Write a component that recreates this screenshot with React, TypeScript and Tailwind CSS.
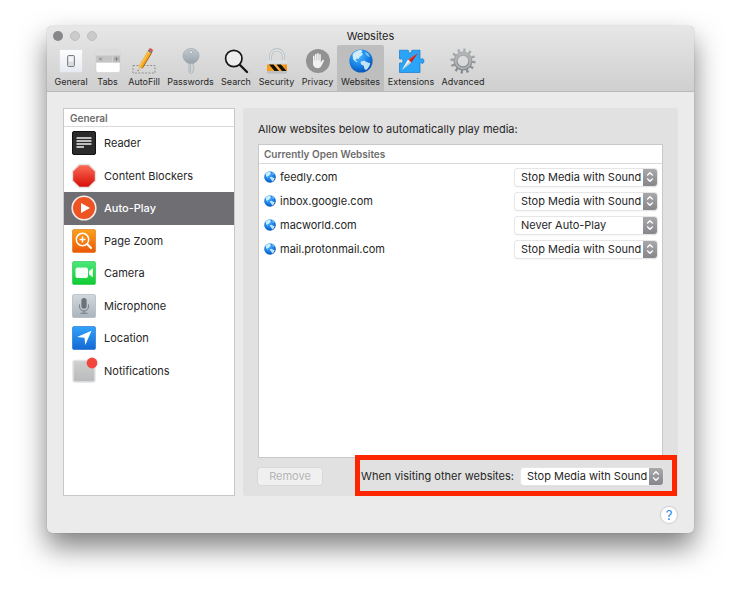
import { useState } from "react";
import type { ReactNode } from "react";

type ToolbarItem = { label: string; width: string; icon: ReactNode };
type SidebarItem = { label: string; icon: ReactNode };
type Website = { host: string; policy: string };

const policies = ["Allow All Auto-Play", "Stop Media with Sound", "Never Auto-Play"];

const Gradients = () => (
  <svg className="absolute h-0 w-0" aria-hidden="true">
    <defs>
      <linearGradient id="light" x1="0" y1="0" x2="0" y2="1">
        <stop offset="0" stopColor="#fdfdfe" />
        <stop offset="1" stopColor="#e6eaf0" />
      </linearGradient>
      <linearGradient id="steel" x1="0" y1="0" x2="0" y2="1">
        <stop offset="0" stopColor="#c3cbd1" />
        <stop offset="1" stopColor="#98a3ab" />
      </linearGradient>
      <linearGradient id="gear" x1="0" y1="0" x2="0" y2="1">
        <stop offset="0" stopColor="#a9acae" />
        <stop offset="1" stopColor="#85888b" />
      </linearGradient>
      <linearGradient id="body" x1="0" y1="0" x2="0" y2="1">
        <stop offset="0" stopColor="#e2e5e8" />
        <stop offset="1" stopColor="#b6babd" />
      </linearGradient>
      <linearGradient id="amber" x1="0" y1="0" x2="1" y2="0">
        <stop offset="0" stopColor="#f59a12" />
        <stop offset="0.5" stopColor="#fdb63a" />
        <stop offset="1" stopColor="#f28c0f" />
      </linearGradient>
      <radialGradient id="ocean" cx="0.4" cy="0.3" r="0.7">
        <stop offset="0" stopColor="#4db8ff" />
        <stop offset="0.6" stopColor="#1680e6" />
        <stop offset="1" stopColor="#0a55b5" />
      </radialGradient>
      <linearGradient id="red" x1="0" y1="0" x2="0" y2="1">
        <stop offset="0" stopColor="#fb6a55" />
        <stop offset="1" stopColor="#d80f08" />
      </linearGradient>
      <linearGradient id="orange" x1="0" y1="0" x2="0" y2="1">
        <stop offset="0" stopColor="#fba31d" />
        <stop offset="1" stopColor="#ec5608" />
      </linearGradient>
      <linearGradient id="green" x1="0" y1="0" x2="0" y2="1">
        <stop offset="0" stopColor="#4be77a" />
        <stop offset="1" stopColor="#10cb33" />
      </linearGradient>
      <linearGradient id="silver" x1="0" y1="0" x2="0" y2="1">
        <stop offset="0" stopColor="#d2d9de" />
        <stop offset="1" stopColor="#aab4bc" />
      </linearGradient>
      <linearGradient id="blue" x1="0" y1="0" x2="0" y2="1">
        <stop offset="0" stopColor="#31a3fb" />
        <stop offset="1" stopColor="#1468d4" />
      </linearGradient>
      <linearGradient id="gray" x1="0" y1="0" x2="0" y2="1">
        <stop offset="0" stopColor="#cfcfcf" />
        <stop offset="1" stopColor="#b9babc" />
      </linearGradient>
    </defs>
  </svg>
);

const Icon = ({ children }: { children: ReactNode }) => (
  <svg viewBox="0 0 26 26" className="h-[26px] w-[26px] shrink-0" aria-hidden="true">
    {children}
  </svg>
);

const Globe = ({ className }: { className: string }) => (
  <svg viewBox="0 0 24 24" className={className} aria-hidden="true">
    <circle cx="12" cy="12" r="11.6" fill="url(#ocean)" />
    <path
      d="M3.500 5.500C5.500 2.800 8.500 1 12 .8l1.500 1.700-1.500 1 1.800 1-.6 1.700-2.400 1.600L9.500 10l-1.700-.6L6.500 11l2 1.800-1 .4L4.200 10.500z"
      fill="#d0ebfc"
    />
    <path
      d="M11.500 12.800l3.300-1.300 2.700 1.500 3.700 1.200c-.5 2.800-2 5.200-4.200 6.800L15.500 20l-.8-3.200-2.700-1.600z"
      fill="#c3e3fa"
    />
    <path d="M16 2.500l2.800 1.700L21 7.500l-1.800.3-2.400-2z" fill="#74c2f8" />
  </svg>
);

const toolbar: ToolbarItem[] = [
  {
    label: "General",
    width: "w-[40px]",
    icon: (
      <Icon>
        <rect x="1.500" y="1.500" width="23" height="23" rx="1" fill="url(#light)" stroke="#d3d5d8" strokeWidth=".5" />
        <rect x="9.600" y="7.500" width="6.800" height="11" rx="1" fill="#d9dbde" stroke="#777a7e" />
        <rect x="10.700" y="8.600" width="4.600" height="5" fill="#f3f4f5" />
      </Icon>
    ),
  },
  {
    label: "Tabs",
    width: "w-[33px]",
    icon: (
      <Icon>
        <rect x="1" y="2" width="24" height="22.500" rx="2" fill="#fff" stroke="#c8c8c8" strokeWidth=".5" />
        <path d="M1 14.500V4a2 2 0 0 1 2-2h20a2 2 0 0 1 2 2v10.500z" fill="#dcdcdc" />
        <path d="M1 7.500h16.500v7H1z" fill="#c5c5c5" />
        <path d="M18 7.500h7v7h-7z" fill="#bdbdbd" />
        <path d="M4 9.500l3 3m0-3l-3 3M19.500 11h4m-2-2v4" stroke="#777" strokeWidth=".8" />
      </Icon>
    ),
  },
  {
    label: "AutoFill",
    width: "w-[40px]",
    icon: (
      <Icon>
        <rect x="2" y="17.500" width="22" height="7.500" fill="none" stroke="#8a8a8a" strokeWidth=".9" strokeDasharray="2 1.400" />
        <path d="M6.500 23.500l1.200-5.200 2.800 1.600z" fill="#e8c498" />
        <path d="M7.700 18.300L16.800 3l3.700 2.200-9.300 15.200z" fill="#f7a51c" />
        <path d="M8.700 18.700L18 3.700" stroke="#ffd367" strokeWidth="1" />
        <path d="M11.200 20.400l9.300-15.200" stroke="#8a5210" strokeWidth=".8" />
        <path d="M16.800 3l1-1.500 3.700 2.200-1 1.500z" fill="#6b7176" />
        <path d="M17.800 1.500l.5-.9c1-.9 3.600.5 3.600 2l-.4 1.100z" fill="#e5484e" />
        <path d="M6.500 23.500l.4-1.800.9.600z" fill="#444" />
      </Icon>
    ),
  },
  {
    label: "Passwords",
    width: "w-[53px]",
    icon: (
      <Icon>
        <path d="M11 14h4v3.500l1.300 1-1.300 1.200 1.300 1.300-1.300 1.200V24l-1.700 1.800L11 24z" fill="#d3d7da" stroke="#969da2" strokeWidth=".6" />
        <path d="M12.600 14.500v9.500" stroke="#9aa1a6" strokeWidth=".6" />
        <path d="M5 8c0-4.500 3.500-7.500 8-7.500S21 3.500 21 8c0 3.600-3 6.300-5.500 7.300h-5C8 14.300 5 11.600 5 8z" fill="url(#steel)" stroke="#98a2a9" strokeWidth=".6" />
        <circle cx="13" cy="4.300" r="1.500" fill="#eceeef" stroke="#8b969e" strokeWidth=".6" />
      </Icon>
    ),
  },
  {
    label: "Search",
    width: "w-[38px]",
    icon: (
      <Icon>
        <circle cx="10.800" cy="10.500" r="8.200" fill="#f5f5f5" fillOpacity=".7" stroke="#171717" strokeWidth="1.700" />
        <path d="M17 17l7 7" stroke="#171717" strokeWidth="2.400" strokeLinecap="round" />
      </Icon>
    ),
  },
  {
    label: "Security",
    width: "w-[43px]",
    icon: (
      <Icon>
        <path d="M6.500 13V8.300a6.500 6.500 0 0 1 13 0V13" fill="none" stroke="#a9b3b9" strokeWidth="3" />
        <path d="M6.500 13V8.300a6.500 6.500 0 0 1 13 0V13" fill="none" stroke="#dce2e5" strokeWidth="1.800" />
        <rect x="3" y="12.500" width="20" height="13" rx="1" fill="url(#body)" />
        <path d="M3 16.500h20v6.500H3z" fill="url(#amber)" />
        <path d="M5 16.500h4.500l5.500 6.500h-4.500zM12.500 16.500H17l5.500 6.500H18z" fill="#17120b" />
      </Icon>
    ),
  },
  {
    label: "Privacy",
    width: "w-[39px]",
    icon: (
      <Icon>
        <circle cx="13" cy="13" r="12" fill="#929292" />
        <path
          d="M8 13.500V8.500c0-1.200 1.600-1.200 1.600 0v4h.4V6.600c0-1.200 1.700-1.200 1.700 0v5.600h.4V5.800c0-1.200 1.700-1.200 1.700 0v6.400h.4V7c0-1.200 1.600-1.200 1.600 0v7.500l1.500-2.200c.7-1 2-.4 1.600.6l-2.600 5.200c-.7 1.400-1.800 2.100-3.500 2.100C9.500 20.200 8 18 8 15.500z"
          fill="#f1f1f1"
        />
      </Icon>
    ),
  },
  { label: "Websites", width: "w-[47px]", icon: <Globe className="m-px h-6 w-6" /> },
  {
    label: "Extensions",
    width: "w-[54px]",
    icon: (
      <svg viewBox="0 0 28 26" className="h-[26px] w-7" aria-hidden="true">
        <path
          d="M2.500 2.200H11c.6 0 .7.800.4 1.300-.9 1.900 4.100 1.900 3.200 0-.3-.5-.2-1.300.4-1.300h8v8.600c.6.800 1.400.3 2-.1 2.600-.8 2.600 5.400 0 4.600-.6-.4-1.400-.9-2-.1v9.300H2.500v-9.300c.5-.7 1.200-.3 1.800 0 2.300.5 2.300-4.900 0-4.400-.6.300-1.300.700-1.800 0z"
          fill="#2aa4f6"
          stroke="#1279cf"
          strokeWidth=".7"
        />
        <path d="M20.800 5.200l-6.600 9.400-3.200-3.200z" fill="#ee3a2e" />
        <path d="M20.800 5.200l-6.600 9.400-1.600-1.600z" fill="#c01d18" />
        <path d="M5 21.800l6-10.400 3.200 3.200z" fill="#fafafa" />
        <path d="M5 21.800l7.600-8.800 1.600 1.600z" fill="#c4cbd0" />
      </svg>
    ),
  },
  {
    label: "Advanced",
    width: "w-[50px]",
    icon: (
      <Icon>
        <circle cx="13" cy="13" r="10.700" fill="none" stroke="url(#gear)" strokeWidth="3.600" strokeDasharray="2.200 3.402" />
        <circle cx="13" cy="13" r="7.400" fill="none" stroke="url(#gear)" strokeWidth="4.200" />
        <circle cx="13" cy="13" r="7.400" fill="none" stroke="#b5b8ba" strokeWidth="1.600" />
      </Icon>
    ),
  },
];

const sidebar: SidebarItem[] = [
  {
    label: "Reader",
    icon: (
      <Icon>
        <rect x="1.500" y="1.500" width="23" height="23" rx="1.500" fill="#2b2b2b" stroke="#111" />
        <path d="M5.500 8h15M5.500 11h15M5.500 14h15M5.500 17h7.500" stroke="#f0f0f0" strokeWidth="1.500" />
      </Icon>
    ),
  },
  {
    label: "Content Blockers",
    icon: (
      <Icon>
        <path d="M8 .8h10l7.200 7.200v10L18 25.200H8L.8 18V8z" fill="#e4e2e1" />
        <path d="M8.600 2.200h8.800l6.400 6.400v8.800l-6.400 6.400H8.600l-6.400-6.400V8.600z" fill="url(#red)" />
      </Icon>
    ),
  },
  {
    label: "Auto-Play",
    icon: (
      <Icon>
        <circle cx="13" cy="13" r="11.800" fill="#ee5323" stroke="#f3eeeb" strokeWidth="1.600" />
        <path d="M10 8l9 5-9 5z" fill="#fff" />
      </Icon>
    ),
  },
  {
    label: "Page Zoom",
    icon: (
      <Icon>
        <rect x="1.500" y="1.500" width="23" height="23" rx="1.500" fill="url(#orange)" stroke="#e26b0c" strokeWidth=".6" />
        <circle cx="11.500" cy="11.500" r="6.200" fill="none" stroke="#fff" strokeWidth="1.500" />
        <path d="M8.500 11.500h6m-3-3v6" stroke="#fff" strokeWidth="1.500" />
        <path d="M16.300 16.300l3.700 3.700" stroke="#fff" strokeWidth="2.200" strokeLinecap="round" />
      </Icon>
    ),
  },
  {
    label: "Camera",
    icon: (
      <Icon>
        <rect x="1.500" y="1.500" width="23" height="23" rx="1.500" fill="url(#green)" stroke="#1fc444" strokeWidth=".6" />
        <rect x="4.500" y="7.500" width="12.500" height="10.500" rx="2" fill="#f6fff8" />
        <path d="M18 11l3.800-2.800v9L18 14.500z" fill="#f6fff8" />
      </Icon>
    ),
  },
  {
    label: "Microphone",
    icon: (
      <Icon>
        <rect x="1.500" y="1.500" width="23" height="23" rx="1.500" fill="url(#silver)" stroke="#a3acb3" strokeWidth=".6" />
        <rect x="10.400" y="5" width="5.200" height="10.500" rx="2.600" fill="#6a7178" />
        <path d="M8.500 11.500v2a4.500 4.500 0 0 0 9 0v-2M13 18v2M9.500 20.300h7" fill="none" stroke="#757c83" />
      </Icon>
    ),
  },
  {
    label: "Location",
    icon: (
      <Icon>
        <rect x="1.500" y="1.500" width="23" height="23" rx="1.500" fill="url(#blue)" stroke="#1a6bc9" strokeWidth=".6" />
        <path d="M20.500 5.800L14.300 20l-.8-7.200-7.500-.8z" fill="#fff" />
      </Icon>
    ),
  },
  {
    label: "Notifications",
    icon: (
      <svg viewBox="0 0 26 26" className="h-[26px] w-[26px] shrink-0 overflow-visible" aria-hidden="true">
        <rect x="2" y="2.500" width="22" height="21.500" rx="2" fill="url(#gray)" stroke="#e3e3e3" strokeWidth="1.500" />
        <circle cx="21" cy="5" r="5.400" fill="#f2463f" />
      </svg>
    ),
  },
];

const initialWebsites: Website[] = [
  { host: "feedly.com", policy: "Stop Media with Sound" },
  { host: "inbox.google.com", policy: "Stop Media with Sound" },
  { host: "macworld.com", policy: "Never Auto-Play" },
  { host: "mail.protonmail.com", policy: "Stop Media with Sound" },
];

type PolicySelectProps = { id: string; value: string; onChange: (value: string) => void };

function PolicySelect({ id, value, onChange }: PolicySelectProps) {
  return (
    <div className="relative h-[17px] w-[142px] shrink-0 overflow-hidden rounded-[3px] bg-white shadow-[0_0_0_1px_#e6e6e6,0_1px_1px_#a8a8a8]">
      <select
        id={id}
        value={value}
        onChange={(e) => onChange(e.target.value)}
        className="block h-full w-full appearance-none bg-transparent pl-[6px] text-[11px] leading-[17px] outline-none"
      >
        {policies.map((policy) => (
          <option key={policy}>{policy}</option>
        ))}
      </select>
      <span className="pointer-events-none absolute inset-y-0 right-0 flex w-[14px] items-center justify-center bg-linear-to-b from-[#a9a9ad] to-[#86868b]">
        <svg viewBox="0 0 8 12" className="h-3 w-2" fill="none" stroke="#fff" strokeWidth="1.300" aria-hidden="true">
          <path d="M1.200 4.500L4 1.700l2.800 2.800M1.200 7.500L4 10.300l2.800-2.800" />
        </svg>
      </span>
    </div>
  );
}

export default function App() {
  const [tab, setTab] = useState("Websites");
  const [section, setSection] = useState("Auto-Play");
  const [websites, setWebsites] = useState(initialWebsites);
  const [otherPolicy, setOtherPolicy] = useState("Stop Media with Sound");

  const handlePolicyChange = (host: string, policy: string) => {
    setWebsites((prev) => prev.map((site) => (site.host === host ? { ...site, policy } : site)));
  };

  return (
    <div className="min-h-screen bg-white px-[47px] pt-[26px] pb-[66px] font-[Inter,'Liberation_Sans',sans-serif] text-[11px] text-[#262626]">
      <Gradients />
      <div className="overflow-hidden rounded-[5px] bg-[#ebebeb] shadow-[0_0_1px_rgba(0,0,0,0.4),0_14px_28px_rgba(0,0,0,0.5)]">
        <header className="border-b border-[#bababa] bg-linear-to-b from-[#e7e7e7] to-[#cfcfcf]">
          <div className="grid h-[19px] grid-cols-[1fr_auto_1fr] items-center px-[6px]">
            <div className="flex gap-[7px]">
              <button aria-label="Close" className="h-[10px] w-[10px] rounded-full bg-[#87878a]" />
              <button aria-label="Minimize" className="h-[10px] w-[10px] rounded-full border border-[#bdbdbd] bg-[#cbcbcb]" />
              <button aria-label="Zoom" className="h-[10px] w-[10px] rounded-full border border-[#bdbdbd] bg-[#cbcbcb]" />
            </div>
            <h1 className="leading-4">Websites</h1>
          </div>
          <nav className="flex pl-1">
            {toolbar.map((item) => (
              <button
                key={item.label}
                onClick={() => setTab(item.label)}
                className={`flex h-[46px] shrink-0 flex-col items-center rounded-t-[2px] pt-[3px] ${item.width} ${
                  tab === item.label ? "bg-[#bebebe]" : ""
                }`}
              >
                {item.icon}
                <span className="mt-px text-[9px] leading-[14px]">{item.label}</span>
              </button>
            ))}
          </nav>
        </header>

        <main className="flex gap-2 px-4 pt-4">
          <aside className="w-[172px] shrink-0 border border-[#c8c8c8] bg-white">
            <h2 className="h-[18px] border-b border-[#dadada] pl-[6px] text-[10px] font-semibold leading-[18px] text-[#6d6d6d]">
              General
            </h2>
            <ul className="flex h-[260px] flex-col">
              {sidebar.map((item) => (
                <li key={item.label} className="flex flex-1">
                  <button
                    onClick={() => setSection(item.label)}
                    className={`flex w-full items-center gap-[7px] pl-[7px] ${
                      section === item.label ? "bg-[#6e6e73] font-medium text-white" : ""
                    }`}
                  >
                    {item.icon}
                    {item.label}
                  </button>
                </li>
              ))}
            </ul>
          </aside>

          <section className="flex min-w-0 flex-1 flex-col rounded-[3px] bg-[#e1e1e1] px-[15px] pt-[13px] pb-[11px]">
            <p className="leading-4">Allow websites below to automatically play media:</p>
            <div className="mt-[7px] min-h-[314px] border border-[#c8c8c8] bg-white">
              <h3 className="h-[19px] border-b border-[#dadada] pl-[5px] text-[10px] font-semibold leading-[18px] text-[#6d6d6d]">
                Currently Open Websites
              </h3>
              <ul className="pt-px">
                {websites.map((site) => (
                  <li key={site.host} className="flex h-6 items-center px-[5px]">
                    <Globe className="h-3 w-3" />
                    <label htmlFor={site.host} className="ml-1 flex-1">
                      {site.host}
                    </label>
                    <PolicySelect
                      id={site.host}
                      value={site.policy}
                      onChange={(policy) => handlePolicyChange(site.host, policy)}
                    />
                  </li>
                ))}
              </ul>
            </div>
            <div className="mt-[9px] flex h-[18px] items-center justify-between">
              <button
                disabled
                className="h-[17px] w-16 rounded-[3px] bg-[#f0f0f0] leading-[17px] text-[#b5b5b5] shadow-[0_0_0_1px_#d8d8d8]"
              >
                Remove
              </button>
              <div className="relative flex items-center gap-[7px]">
                <label htmlFor="other-websites">When visiting other websites:</label>
                <PolicySelect id="other-websites" value={otherPolicy} onChange={setOtherPolicy} />
                <span className="pointer-events-none absolute -top-[13px] -right-[14px] -bottom-[11px] -left-[6px] border-[5px] border-[#fd2600]" />
              </div>
            </div>
          </section>
        </main>

        <footer className="flex justify-end px-[17px] pt-[11px] pb-[10px]">
          <button
            aria-label="Help"
            className="h-4 w-4 rounded-full bg-white text-[13px] leading-4 text-[#1a86f0] shadow-[0_0_1px_1px_#cdcdcd]"
          >
            ?
          </button>
        </footer>
      </div>
    </div>
  );
}
